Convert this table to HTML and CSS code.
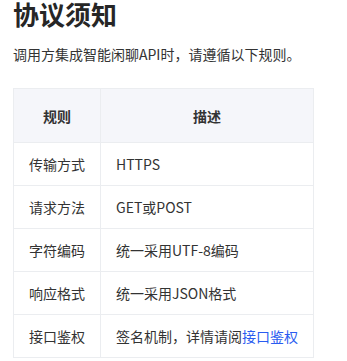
FILE: index.html
```html
<!DOCTYPE html>
<html>
<head>
    <title>协议须知</title>
    <link rel="stylesheet" href="styles.css">
</head>
<body>
    <div class="doc">
        <h1 class="title">协议须知</h1>
        <p class="intro">调用方集成智能闲聊API时，请遵循以下规则。</p>

        <table class="rules">
            <thead>
                <tr>
                    <th class="col-rule">规则</th>
                    <th class="col-desc">描述</th>
                </tr>
            </thead>
            <tbody>
                <tr>
                    <td class="col-rule">传输方式</td>
                    <td class="col-desc">HTTPS</td>
                </tr>
                <tr>
                    <td class="col-rule">请求方法</td>
                    <td class="col-desc">GET或POST</td>
                </tr>
                <tr>
                    <td class="col-rule">字符编码</td>
                    <td class="col-desc">统一采用UTF-8编码</td>
                </tr>
                <tr>
                    <td class="col-rule">响应格式</td>
                    <td class="col-desc">统一采用JSON格式</td>
                </tr>
                <tr>
                    <td class="col-rule">接口鉴权</td>
                    <td class="col-desc">签名机制，详情请阅<a href="#auth">接口鉴权</a></td>
                </tr>
            </tbody>
        </table>
    </div>
</body>
</html>
```

FILE: styles.css
```css
body {
    font-family: "Noto Sans CJK SC", "Noto Sans", sans-serif;
    color: #333;
    background-color: #fff;
    margin: 0;
    padding: 0;
}

.doc {
    padding: 0 13px;
}

.title {
    font-size: 26px;
    font-weight: bold;
    line-height: 28px;
    margin: 0;
    color: #262626;
}

.intro {
    font-size: 14px;
    line-height: 22px;
    margin: 15px 0 23px;
}

.rules {
    border-collapse: collapse;
    width: 301px;
    font-size: 14px;
}

.rules th,
.rules td {
    border: 1px solid #ebedf0;
    padding: 0;
    line-height: 20px;
}

.rules th {
    height: 53px;
    background-color: #f5f6fa;
    font-weight: bold;
    text-align: center;
}

.rules td {
    height: 42px;
}

.col-rule {
    width: 86px;
    text-align: center;
}

.rules td.col-desc {
    padding-left: 15px;
}

.rules a {
    color: #2a5cf0;
    text-decoration: none;
}
```
